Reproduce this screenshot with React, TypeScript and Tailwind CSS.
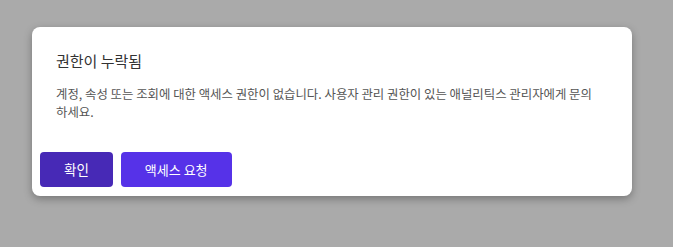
export default function App() {
  return (
    <div
      className="min-h-screen w-full bg-[#aaaaaa] pl-8 pt-[27px]"
      style={{ fontFamily: '"Noto Sans CJK KR", "Noto Sans", sans-serif' }}
    >
      <div className="w-[600px] rounded-lg bg-white pb-[9px] pt-6 shadow-[0_3px_8px_rgba(0,0,0,0.3)]">
        <div className="px-6">
          <h2 className="text-[15px] leading-5 font-normal text-[#333333]">권한이 누락됨</h2>
          <p className="mt-[14px] pr-[5px] text-[12.4px] leading-[18px] text-[#555555]">
            계정, 속성 또는 조회에 대한 액세스 권한이 없습니다. 사용자 관리 권한이 있는 애널리틱스 관리자에게 문의하세요.
          </p>
        </div>
        <div className="mt-[31px] flex gap-2 px-2">
          <button
            type="button"
            className="h-[35px] rounded bg-[#4729b6] px-6 text-[13.5px] text-white"
          >
            확인
          </button>
          <button
            type="button"
            className="h-[35px] rounded bg-[#5632e8] px-6 text-[13px] text-white"
          >
            액세스 요청
          </button>
        </div>
      </div>
    </div>
  );
}
